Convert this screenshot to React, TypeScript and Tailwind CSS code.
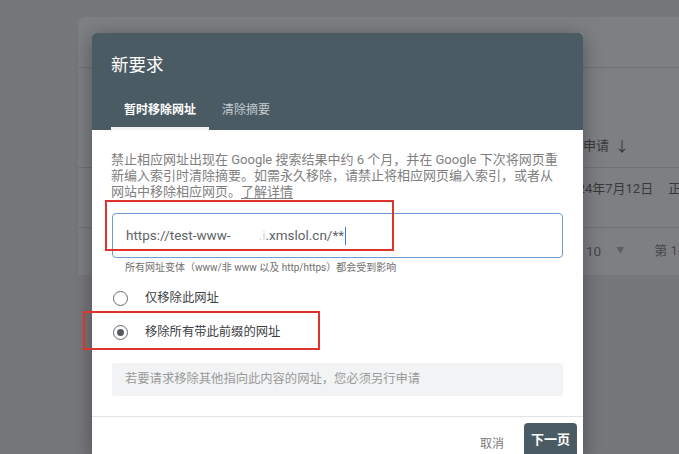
import React from "react";

const FONT = { fontFamily: 'Roboto, "Noto Sans CJK SC", sans-serif' };

function Radio({ checked, label }: { checked?: boolean; label: string }) {
  return (
    <div className="flex h-[34px] items-center">
      <span className="ml-[1px] flex h-[15px] w-[15px] items-center justify-center rounded-full border-[1.5px] border-[#6b6b6b]">
        {checked && <span className="h-[7px] w-[7px] rounded-full bg-[#555a5e]" />}
      </span>
      <span className="ml-[17px] text-[12.3px] text-[#3c4043]">{label}</span>
    </div>
  );
}

export default function App() {
  return (
    <div className="relative h-[454px] w-[679px] overflow-hidden bg-[#76777b]" style={FONT}>
      {/* page behind the scrim */}
      <div className="pt-[17px] pl-[78px]">
        <div className="flex h-[258px] flex-col overflow-hidden whitespace-nowrap rounded-tl-lg bg-[#7e7f82] text-[13px] leading-[18px] text-[#38393b]">
          <div className="h-[51px] shrink-0 border-b border-[#707173]" />
          <div className="flex h-[100px] shrink-0 items-end border-b border-[#707173] pb-[12px] pl-[479px]">
            <span>提交申请</span>
            <span className="ml-[6px] text-[14px]">↓</span>
            <span className="ml-[50px]">状态</span>
          </div>
          <div className="flex h-[60px] shrink-0 items-start border-b border-[#707173] pt-[12px] pl-[485px]">
            <span>2024年7月12日</span>
            <span className="ml-[15px]">正在处理</span>
          </div>
          <div className="flex h-[46px] shrink-0 items-center pl-[508px] text-[#46474a]">
            <span className="text-[13.5px]">10</span>
            <span className="ml-[15px] text-[8px] text-[#5c5d60]">▼</span>
            <span className="ml-[30px]">第 1-1 行，共 1 行</span>
          </div>
        </div>
      </div>

      {/* dialog */}
      <div className="absolute left-[92px] top-[33px] w-[491px] overflow-hidden rounded-t-[4px] bg-white shadow-[0_4px_20px_rgba(0,0,0,0.35)]">
        <div className="h-[97px] bg-[#4b5b64] px-[19px] pt-[20px]">
          <div className="h-[24px] text-[17.5px] leading-[24px] text-white">新要求</div>
          <div className="mt-[16px] flex h-[37px]">
            <div className="flex items-center border-b-[3px] border-[#f1f3f4] px-[13px] text-[12px] font-bold text-white">
              暂时移除网址
            </div>
            <div className="flex items-center border-b-[3px] border-transparent px-[13px] text-[12px] text-[#c3cbd0]">
              清除摘要
            </div>
          </div>
        </div>

        <div className="px-[20px] pt-[22px] pb-[20px]">
          <p className="-ml-px text-[13px] leading-[16px] text-[#808080] whitespace-nowrap">
            禁止相应网址出现在 Google 搜索结果中约 6 个月，并在 Google 下次将网页重
            <br />
            新编入索引时清除摘要。如需永久移除，请禁止将相应网页编入索引，或者从
            <br />
            网站中移除相应网页。<span className="underline underline-offset-2">了解详情</span>
          </p>

          <div className="mt-[13px] flex h-[45px] items-center rounded-[4px] border border-[#6e9bd1] pl-[13px] text-[13.5px] text-[#5f6368]">
            <span>https://test-www-</span>
            <span className="w-[28px]" />
            <span className="text-[#d4d6d8]">.i</span>
            <span>.xmslol.cn/**</span>
            <span className="ml-[1px] h-[18px] w-px bg-[#3b78e7]" />
          </div>

          <div className="mt-[3px] pl-[13px] text-[10px] leading-[14px] text-[#6f6f6f]">
            所有网址变体（www/非 www 以及 http/https）都会受到影响
          </div>

          <div className="mt-[6px]">
            <Radio label="仅移除此网址" />
            <Radio checked label="移除所有带此前缀的网址" />
          </div>

          <div className="mt-[14px] flex h-[33px] items-center rounded-[3px] bg-[#f1f3f4] pl-[13px] text-[12.3px] text-[#9a9a9a]">
            若要请求移除其他指向此内容的网址，您必须另行申请
          </div>
        </div>

        <div className="flex items-start justify-end border-t border-[#e3e3e3] pt-[6px] pr-[6px]">
          <span className="mt-[12px] text-[12px] text-[#7a7a7a]">取消</span>
          <div className="ml-[20px] flex h-[34px] items-center rounded-[4px] bg-[#4b5b64] px-[7px] text-[13px] font-bold text-white">
            下一页
          </div>
        </div>
      </div>

      {/* red annotation boxes */}
      <div className="absolute left-[105px] top-[200px] h-[51px] w-[289px] border-2 border-[#e0322f]" />
      <div className="absolute left-[83px] top-[311px] h-[39px] w-[237px] border-2 border-[#e0322f]" />
    </div>
  );
}
